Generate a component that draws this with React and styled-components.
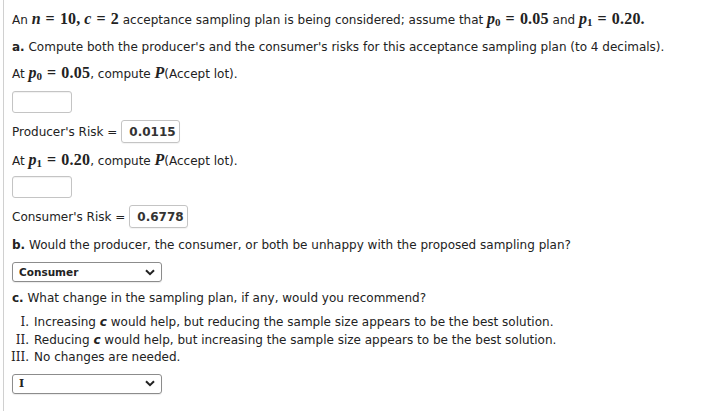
import React from "react";
import styled, { createGlobalStyle } from "styled-components";

const GlobalStyle = createGlobalStyle`
  html, body {
    margin: 0;
    padding: 0;
    background: #ffffff;
  }
  body {
    font-family: "DejaVu Sans", Verdana, sans-serif;
    font-size: 12px;
    color: #222222;
  }
`;

const Page = styled.div`
  margin-left: 3px;
  border-left: 1px solid #d0d0d0;
  padding-left: 8px;
  min-height: 411px;
  display: flex;
  flex-direction: column;
  align-items: flex-start;
`;

const Para = styled.div`
  margin-top: ${(p) => p.$top}px;
  line-height: 18px;
  height: 18px;
  white-space: nowrap;
`;

const M = styled.span`
  font-family: "Liberation Serif", "DejaVu Serif", serif;
  font-size: 16px;
  font-weight: 600;
  letter-spacing: 0.2px;
`;

const Mi = styled.i`
  font-family: "Liberation Serif", "DejaVu Serif", serif;
  font-size: 16px;
  font-weight: 600;
`;

const Sub = styled.sub`
  font-size: 11px;
  vertical-align: -2px;
  font-style: normal;
`;

const Eq = styled.span`
  margin: 0 5px;
`;

const Emptybox = styled.div`
  margin-top: ${(p) => p.$top}px;
  width: 58px;
  height: 20px;
  border: 1px solid #c4c4c4;
  border-radius: 3px;
  box-shadow: inset 0 1px 1px rgba(0, 0, 0, 0.06);
`;

const RiskRow = styled.div`
  margin-top: ${(p) => p.$top}px;
  display: flex;
  align-items: center;
  height: 23px;
  white-space: nowrap;
`;

const Valuebox = styled.div`
  margin-left: ${(p) => p.$left}px;
  width: 59px;
  height: 23px;
  border: 1px solid #c4c4c4;
  border-radius: 3px;
  display: flex;
  align-items: center;
  padding-left: 7px;
  box-sizing: border-box;
  font-weight: bold;
  font-size: 12px;
  color: #333;
  box-shadow: 0 1px 1px rgba(0, 0, 0, 0.05);
`;

const Select = styled.div`
  margin-top: ${(p) => p.$top}px;
  width: 150px;
  height: 20px;
  box-sizing: border-box;
  border: 1px solid #8c8c8c;
  border-radius: 3px;
  display: flex;
  align-items: center;
  justify-content: space-between;
  padding: 0 6px 0 6px;
  font-size: 10.5px;
  font-weight: bold;
  color: #222;
  box-shadow: 0 1px 1px rgba(0, 0, 0, 0.08);
`;

const SerifPick = styled.span`
  font-family: "DejaVu Serif", serif;
  font-weight: bold;
  font-size: 11px;
`;

const List = styled.div`
  margin-top: ${(p) => p.$top}px;
  margin-left: -7px;
  display: grid;
  grid-template-columns: 24px auto;
  column-gap: 5px;
  line-height: 17.5px;
  white-space: nowrap;
`;

const Num = styled.span`
  text-align: right;
  font-family: "DejaVu Serif", serif;
  font-size: 12px;
`;

const Ci = styled.b`
  font-style: italic;
`;

function Chevron() {
  return (
    <svg width="10" height="7" viewBox="0 0 10 7">
      <path d="M1 1.2 L5 5.2 L9 1.2" fill="none" stroke="#222" strokeWidth="2" />
    </svg>
  );
}

export default function App() {
  return (
    <>
      <GlobalStyle />
      <Page>
        <Para $top={10}>
          An <Mi>n</Mi>
          <Eq>
            <M>=</M>
          </Eq>
          <M>10,</M> <Mi>c</Mi>
          <Eq>
            <M>=</M>
          </Eq>
          <M>2</M> acceptance sampling plan is being considered; assume that{" "}
          <Mi>
            p<Sub>0</Sub>
          </Mi>
          <Eq>
            <M>=</M>
          </Eq>
          <M>0.05</M> and{" "}
          <Mi>
            p<Sub>1</Sub>
          </Mi>
          <Eq>
            <M>=</M>
          </Eq>
          <M>0.20.</M>
        </Para>
        <Para $top={10}>
          <b>a.</b> Compute both the producer's and the consumer's risks for
          this acceptance sampling plan (to 4 decimals).
        </Para>
        <Para $top={8}>
          At{" "}
          <Mi>
            p<Sub>0</Sub>
          </Mi>
          <Eq>
            <M>=</M>
          </Eq>
          <M>0.05</M>, compute <Mi>P</Mi>(Accept lot).
        </Para>
        <Emptybox $top={9} />
        <RiskRow $top={7}>
          Producer's Risk =<Valuebox $left={4}>0.0115</Valuebox>
        </RiskRow>
        <Para $top={8}>
          At{" "}
          <Mi>
            p<Sub>1</Sub>
          </Mi>
          <Eq>
            <M>=</M>
          </Eq>
          <M>0.20</M>, compute <Mi>P</Mi>(Accept lot).
        </Para>
        <Emptybox $top={7} />
        <RiskRow $top={7}>
          Consumer's Risk =<Valuebox $left={4}>0.6778</Valuebox>
        </RiskRow>
        <Para $top={8}>
          <b>b.</b> Would the producer, the consumer, or both be unhappy with
          the proposed sampling plan?
        </Para>
        <Select $top={8}>
          <span>Consumer</span>
          <Chevron />
        </Select>
        <Para $top={7}>
          <b>c.</b> What change in the sampling plan, if any, would you
          recommend?
        </Para>
        <List $top={7}>
          <Num>I.</Num>
          <span>
            Increasing <Ci>c</Ci> would help, but reducing the sample size
            appears to be the best solution.
          </span>
          <Num>II.</Num>
          <span>
            Reducing <Ci>c</Ci> would help, but increasing the sample size
            appears to be the best solution.
          </span>
          <Num>III.</Num>
          <span>No changes are needed.</span>
        </List>
        <Select $top={7}>
          <SerifPick>I</SerifPick>
          <Chevron />
        </Select>
      </Page>
    </>
  );
}
